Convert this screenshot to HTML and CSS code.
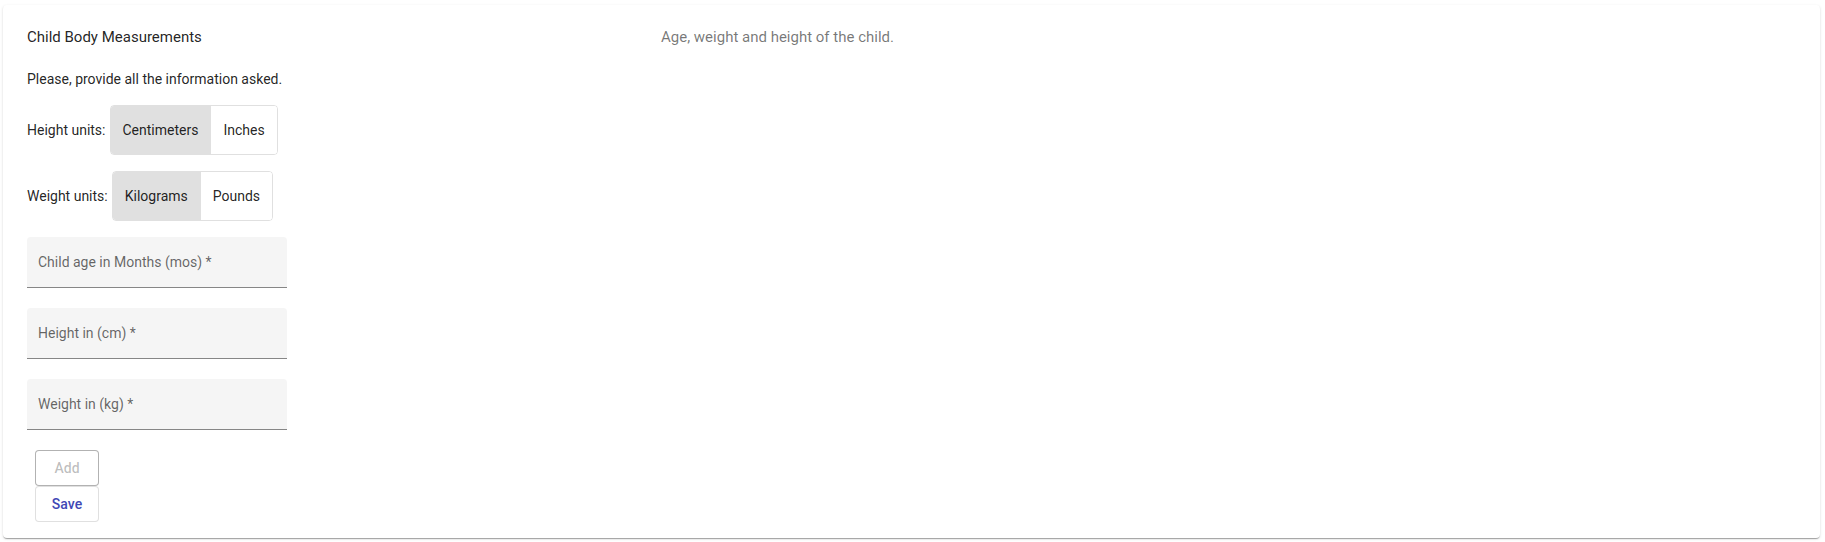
FILE: index.html
```html
<!DOCTYPE html>
<html lang="en">
<head>
<meta charset="utf-8">
<title>Child Body Measurements</title>
<link rel="stylesheet" href="styles.css">
</head>
<body>
<div class="page">
  <section class="card">
    <div class="header">
      <div class="title">Child Body Measurements</div>
      <div class="desc">Age, weight and height of the child.</div>
    </div>
    <p class="intro">Please, provide all the information asked.</p>
    <div class="unit-row">
      <span class="unit-label">Height units:</span>
      <div class="toggle-group">
        <button class="toggle selected">Centimeters</button>
        <button class="toggle">Inches</button>
      </div>
    </div>
    <div class="unit-row">
      <span class="unit-label">Weight units:</span>
      <div class="toggle-group">
        <button class="toggle selected">Kilograms</button>
        <button class="toggle">Pounds</button>
      </div>
    </div>
    <div class="fields">
      <label class="field"><span class="field-label">Child age in Months (mos) *</span></label>
      <label class="field"><span class="field-label">Height in (cm) *</span></label>
      <label class="field"><span class="field-label">Weight in (kg) *</span></label>
    </div>
    <div class="actions">
      <button class="btn btn-disabled" disabled>Add</button>
      <button class="btn btn-primary">Save</button>
    </div>
  </section>
</div>
</body>
</html>
```

FILE: styles.css
```css
* { box-sizing: border-box; }
html, body { margin: 0; padding: 0; background: #ffffff; }
body {
  font-family: Roboto, "Liberation Sans", Arial, sans-serif;
  color: rgba(0, 0, 0, 0.87);
}
.page {
  padding: 5px 5px 4px 3px;
}
.card {
  background: #fff;
  border-radius: 4px;
  box-shadow: 0px 2px 1px -1px rgba(0,0,0,0.2), 0px 1px 1px 0px rgba(0,0,0,0.14), 0px 1px 3px 0px rgba(0,0,0,0.12);
  padding: 22px 24px 16px 24px;
  height: 533px;
}
.header {
  display: flex;
  align-items: center;
  height: 20px;
}
.title {
  width: 634px;
  flex: none;
  font-size: 15px;
  line-height: 20px;
}
.desc {
  font-size: 15px;
  line-height: 20px;
  color: rgba(0, 0, 0, 0.54);
}
.intro {
  margin: 22px 0 16px 0;
  font-size: 14px;
  line-height: 20px;
}
.unit-row {
  display: flex;
  align-items: center;
  gap: 4px;
  margin-bottom: 16px;
  font-size: 14px;
}
.toggle-group {
  display: flex;
  border: 1px solid rgba(0, 0, 0, 0.12);
  border-radius: 4px;
  overflow: hidden;
}
.toggle {
  font-family: Roboto, "Liberation Sans", Arial, sans-serif;
  font-size: 14px;
  font-weight: 400;
  line-height: 26px;
  padding: 11px 12px;
  border: none;
  background: #fff;
  color: rgba(0, 0, 0, 0.87);
  cursor: pointer;
}
.toggle + .toggle {
  border-left: 1px solid rgba(0, 0, 0, 0.12);
}
.toggle.selected {
  background: #e0e0e0;
}
.fields {
  display: flex;
  flex-direction: column;
  gap: 20px;
  width: 260px;
}
.field {
  display: flex;
  align-items: center;
  height: 51px;
  padding: 0 12px 0 11px;
  background: #f5f5f5;
  border-radius: 4px 4px 0 0;
  border-bottom: 1px solid rgba(0, 0, 0, 0.45);
}
.field-label {
  font-size: 14px;
  color: rgba(0, 0, 0, 0.6);
  line-height: 20px;
}
.actions {
  display: flex;
  flex-direction: column;
  align-items: flex-start;
  gap: 0;
  margin: 20px 0 0 8px;
}
.btn {
  font-family: Roboto, "Liberation Sans", Arial, sans-serif;
  font-size: 14px;
  font-weight: 500;
  min-width: 64px;
  height: 36px;
  padding: 5px 15px;
  border-radius: 4px;
  background: #fff;
  line-height: 24px;
}
.btn-disabled {
  border: 1px solid rgba(0, 0, 0, 0.3);
  color: rgba(0, 0, 0, 0.26);
}
.btn-primary {
  border: 1px solid rgba(0, 0, 0, 0.12);
  color: #3f48b5;
  cursor: pointer;
}
```
